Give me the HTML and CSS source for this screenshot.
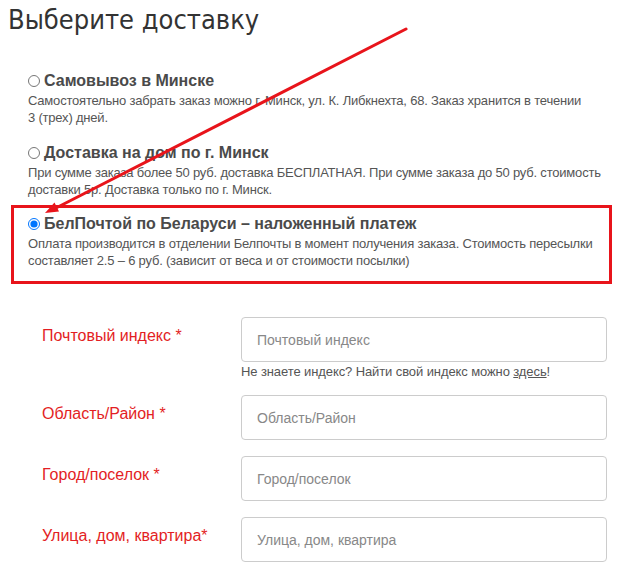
FILE: index.html
```
<!DOCTYPE html>
<html lang="ru">

<head>
    <meta charset="UTF-8">
    <title>Выберите доставку</title>
    <link rel="stylesheet" href="styles.css">
</head>

<body>
    <h1 class="title">Выберите доставку</h1>

    <div class="delivery">
        <label class="option">
            <span class="option-head"><input type="radio" name="delivery"> Самовывоз в Минске</span>
            <span class="option-text">Самостоятельно забрать заказ можно г. Минск, ул. К. Либкнехта, 68. Заказ хранится в течении 3&nbsp;(трех) дней.</span>
        </label>
        <label class="option">
            <span class="option-head"><input type="radio" name="delivery"> Доставка на дом по г. Минск</span>
            <span class="option-text">При сумме заказа более 50 руб. доставка БЕСПЛАТНАЯ. При сумме заказа до 50 руб. стоимость доставки 5р. Доставка только по г. Минск.</span>
        </label>
        <label class="option option-marked">
            <span class="option-head"><input type="radio" name="delivery" checked> БелПочтой по Беларуси – наложенный платеж</span>
            <span class="option-text">Оплата производится в отделении Белпочты в момент получения заказа. Стоимость пересылки составляет 2.5 – 6 руб. (зависит от веса и от стоимости посылки)</span>
        </label>
    </div>

    <form class="address">
        <div class="field">
            <label class="field-label">Почтовый индекс *</label>
            <div class="field-box">
                <input type="text" placeholder="Почтовый индекс">
                <div class="hint">Не знаете индекс? Найти свой индекс можно <a href="#">здесь</a>!</div>
            </div>
        </div>
        <div class="field">
            <label class="field-label">Область/Район *</label>
            <div class="field-box"><input type="text" placeholder="Область/Район"></div>
        </div>
        <div class="field">
            <label class="field-label">Город/поселок *</label>
            <div class="field-box"><input type="text" placeholder="Город/поселок"></div>
        </div>
        <div class="field">
            <label class="field-label">Улица, дом, квартира*</label>
            <div class="field-box"><input type="text" placeholder="Улица, дом, квартира"></div>
        </div>
    </form>

    <svg class="arrow" width="621" height="567" viewBox="0 0 621 567">
        <line x1="406" y1="29" x2="54" y2="209" stroke="#e8141b" stroke-width="3" stroke-linecap="round"/>
        <polygon points="45,213 59,211.5 54.5,202.5" fill="#e8141b"/>
    </svg>
</body>
</html>
```

FILE: styles.css
```
body {
    margin: 0;
    font-family: 'Liberation Sans', Arial, sans-serif;
    color: #555;
    background: #fff;
    position: relative;
}

.title {
    margin: 0;
    padding: 2px 0 0 8px;
    font-family: 'DejaVu Sans Condensed', 'DejaVu Sans', sans-serif;
    font-weight: normal;
    font-size: 27px;
    line-height: 36px;
    color: #333;
}

.delivery {
    margin-top: 32px;
    padding-left: 11px;
    width: 601px;
}

.option {
    display: block;
    padding: 0 0 16px 17px;
}

.option-head {
    display: flex;
    align-items: center;
    font-size: 16px;
    font-weight: bold;
    color: #4a4a4a;
    line-height: 22px;
    gap: 3px;
}

.option-head input {
    margin: 0 1px 0 0;
    width: 12px;
    height: 12px;
}

.option-text {
    display: block;
    margin-top: 1px;
    font-size: 13px;
    letter-spacing: -0.2px;
    line-height: 16.5px;
    padding-right: 2px;
}

.option-marked {
    border: 3px solid #e8141b;
    padding: 5px 4px 12px 14px;
    margin-top: -9px;
}

.address {
    margin-top: 33px;
}

.field {
    display: flex;
    align-items: flex-start;
    margin-bottom: 16px;
}

.field-label {
    width: 199px;
    padding-left: 42px;
    padding-top: 10px;
    font-size: 16px;
    color: #e31e24;
}

.field-box {
    width: 366px;
}

.field-box input {
    box-sizing: border-box;
    width: 100%;
    height: 45px;
    border: 1px solid #ccc;
    border-radius: 4px;
    padding: 0 15px;
    font-family: 'Liberation Sans', Arial, sans-serif;
    font-size: 14px;
    color: #555;
}

.field-box input::placeholder {
    color: #888;
}

.hint {
    font-size: 13px;
    letter-spacing: -0.1px;
    color: #555;
    margin-top: 2px;
}

.hint a {
    color: #555;
}

.arrow {
    position: absolute;
    top: 0;
    left: 0;
    pointer-events: none;
}
```
